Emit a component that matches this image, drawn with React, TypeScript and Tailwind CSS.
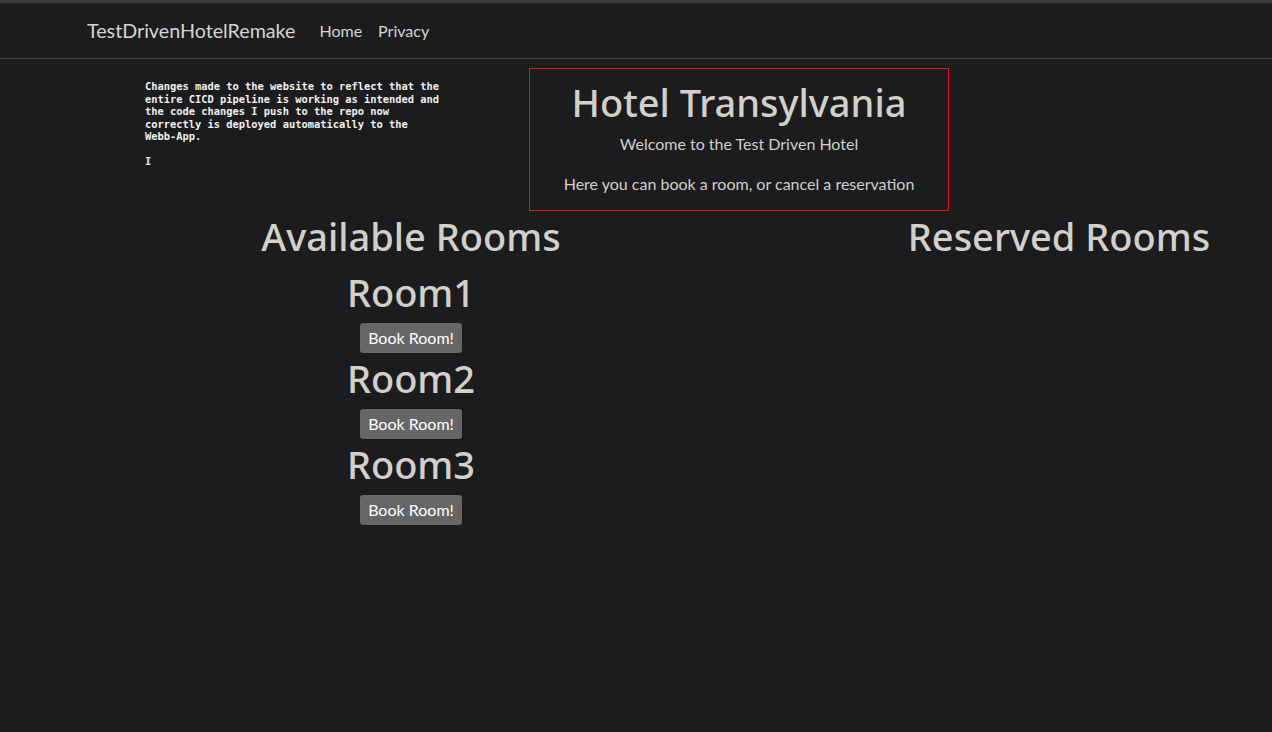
const rooms = ["Room1", "Room2", "Room3"];

const notice = `Changes made to the website to reflect that the
entire CICD pipeline is working as intended and
the code changes I push to the repo now
correctly is deployed automatically to the
Webb-App.

I`;

const heading = "font-['Noto_Sans','Lato',sans-serif] font-medium text-[38px] leading-[48px] pt-[1px] mb-[7px]";

export default function App() {
  return (
    <div className="min-h-screen w-full bg-[#1b1c1e] text-[#d3cfc9] font-['Lato','Open_Sans',sans-serif] border-t-[3px] border-[#393a3c]">
      <nav className="h-[56px] border-b border-[#3b3e41] flex items-center pl-[87px]">
        <span className="text-[19.7px] text-[#d8d4cf]">TestDrivenHotelRemake</span>
        <div className="flex gap-[16px] ml-[24px] text-[16px] text-[#d8d4cf]">
          <a href="#">Home</a>
          <a href="#">Privacy</a>
        </div>
      </nav>

      <div className="flex pt-[9px]">
        <pre className="ml-[145px] w-[384px] pt-[12px] font-['DejaVu_Sans_Mono',monospace] text-[10.4px] leading-[12.5px] font-bold text-[#f2f0ed]">
          {notice}
        </pre>
        <div className="w-[420px] h-[143px] border border-[#e0161c] flex flex-col items-center pt-[8px]">
          <h1 className="font-['Noto_Sans','Lato',sans-serif] font-medium text-[38px] leading-[48px] pt-[1px] mb-[6px]">Hotel Transylvania</h1>
          <p className="text-[16px] leading-[24px] mb-[16px]">Welcome to the Test Driven Hotel</p>
          <p className="text-[16px] leading-[24px]">Here you can book a room, or cancel a reservation</p>
        </div>
      </div>

      <div className="flex">
        <div className="w-[600px] ml-[111px] flex flex-col items-center">
          <h1 className={heading}>Available Rooms</h1>
          {rooms.map((r) => (
            <div key={r} className="flex flex-col items-center">
              <h1 className={heading}>{r}</h1>
              <button className="h-[30px] px-[8px] bg-[#666666] text-white text-[16px] rounded-[3px]">
                Book Room!
              </button>
            </div>
          ))}
        </div>
        <div className="w-[400px] ml-[148px] flex flex-col items-center">
          <h1 className={heading}>Reserved Rooms</h1>
        </div>
      </div>
    </div>
  );
}
